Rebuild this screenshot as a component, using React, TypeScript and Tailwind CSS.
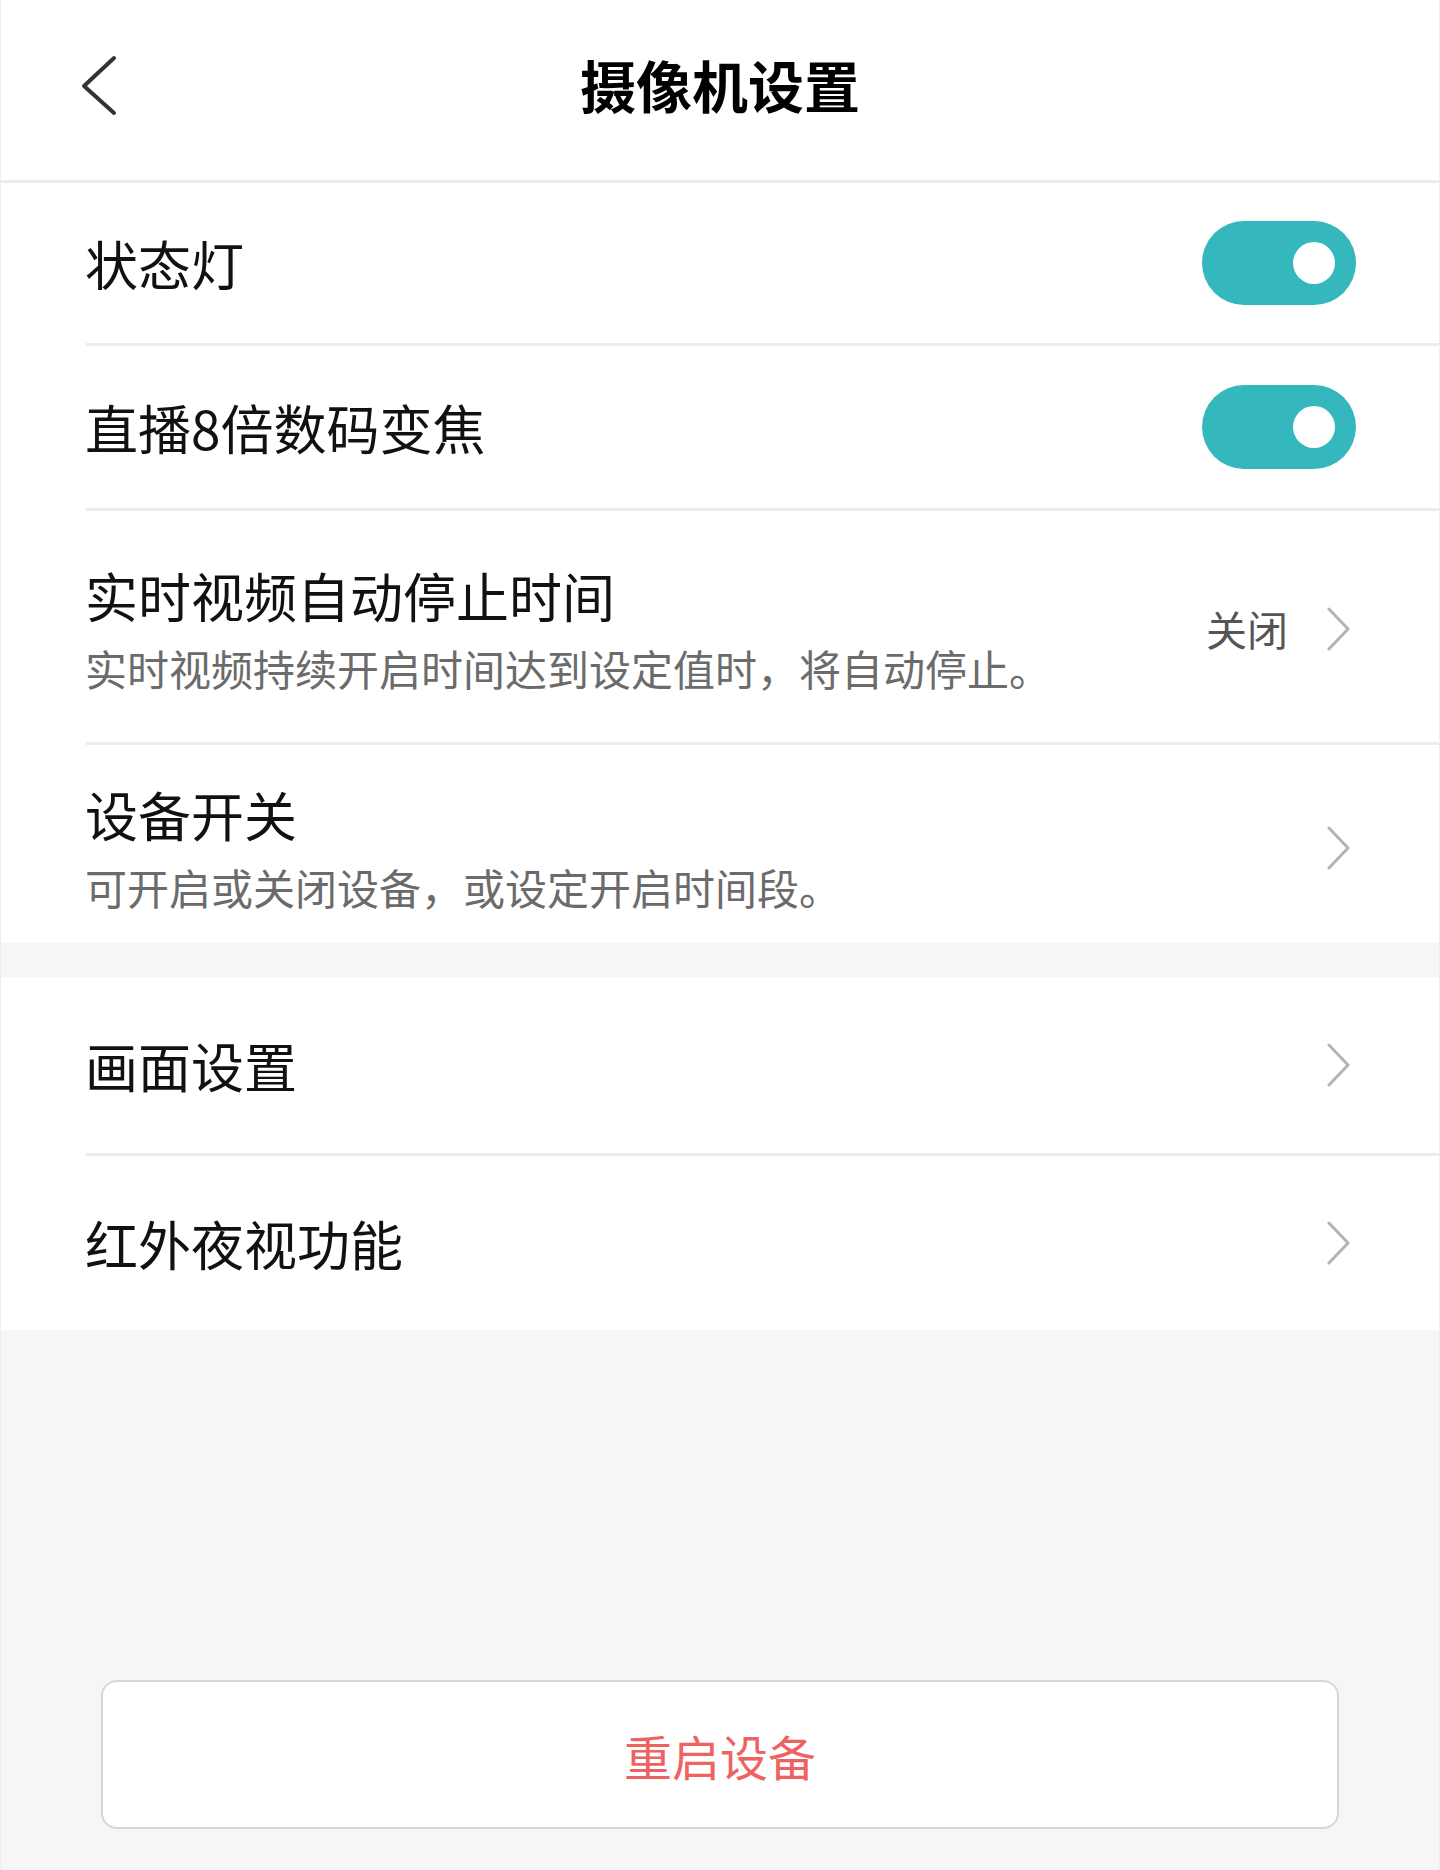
import { ReactNode } from 'react';

function Chevron() {
  return (
    <svg width="24" height="44" viewBox="0 0 24 44" className="shrink-0">
      <polyline points="3,2 22,22 3,42" fill="none" stroke="#b4b4b4" strokeWidth="3" strokeLinecap="round" strokeLinejoin="round" />
    </svg>
  );
}

function Toggle() {
  return (
    <div className="w-[154px] h-[84px] rounded-full bg-[#34b8bd] flex items-center justify-end pr-[21px] shrink-0">
      <div className="w-[42px] h-[42px] rounded-full bg-white" />
    </div>
  );
}

function Divider() {
  return <div className="ml-[85px] h-[3px] bg-[#ececec]" />;
}

function Row({ h, title, sub, right }: { h: string; title: string; sub?: string; right: ReactNode }) {
  return (
    <div className={`flex items-center justify-between pl-[84px] ${h}`}>
      <div className="flex flex-col">
        <span className="text-[53px] leading-none text-[#111]">{title}</span>
        {sub && <span className="mt-[25px] text-[42px] leading-none text-[#6b6b6b]">{sub}</span>}
      </div>
      {right}
    </div>
  );
}

export default function App() {
  return (
    <div className="min-h-[1870px] bg-[#f6f6f6] border-x border-[#eeeeee] font-['Noto_Sans_CJK_SC','Noto_Sans',sans-serif]">
      {/* header */}
      <div className="h-[180px] bg-white grid grid-cols-[1fr_auto_1fr] items-center pb-[12px]">
        <div className="pl-[80px] pt-[4px]">
          <svg width="36" height="62" viewBox="0 0 36 62">
            <polyline points="33,3 3,31 33,58" fill="none" stroke="#333" strokeWidth="4" strokeLinecap="round" strokeLinejoin="round" />
          </svg>
        </div>
        <h1 className="text-[56px] font-bold leading-none text-black">摄像机设置</h1>
        <div />
      </div>
      <div className="h-[3px] bg-[#ececec]" />

      {/* group 1 */}
      <div className="bg-white">
        <Row h="h-[160px] pr-[83px]" title="状态灯" right={<Toggle />} />
        <Divider />
        <Row h="h-[162px] pr-[83px]" title="直播8倍数码变焦" right={<Toggle />} />
        <Divider />
        <Row
          h="h-[231px] pr-[89px] pt-[4px]"
          title="实时视频自动停止时间"
          sub="实时视频持续开启时间达到设定值时，将自动停止。"
          right={
            <div className="flex items-center gap-[38px]">
              <span className="text-[41px] leading-none text-[#555]">关闭</span>
              <Chevron />
            </div>
          }
        />
        <Divider />
        <Row
          h="h-[198px] pr-[89px] pt-[8px]"
          title="设备开关"
          sub="可开启或关闭设备，或设定开启时间段。"
          right={<Chevron />}
        />
      </div>

      <div className="h-[34px]" />

      {/* group 2 */}
      <div className="bg-white">
        <Row h="h-[176px] pr-[89px]" title="画面设置" right={<Chevron />} />
        <Divider />
        <Row h="h-[174px] pr-[89px]" title="红外夜视功能" right={<Chevron />} />
      </div>

      {/* restart */}
      <div className="pt-[350px] px-[100px]">
        <button className="w-full h-[149px] bg-white border-2 border-[#d6d6d6] rounded-[16px] flex items-center justify-center">
          <span className="text-[48px] leading-none text-[#ef6262]">重启设备</span>
        </button>
      </div>
    </div>
  );
}
